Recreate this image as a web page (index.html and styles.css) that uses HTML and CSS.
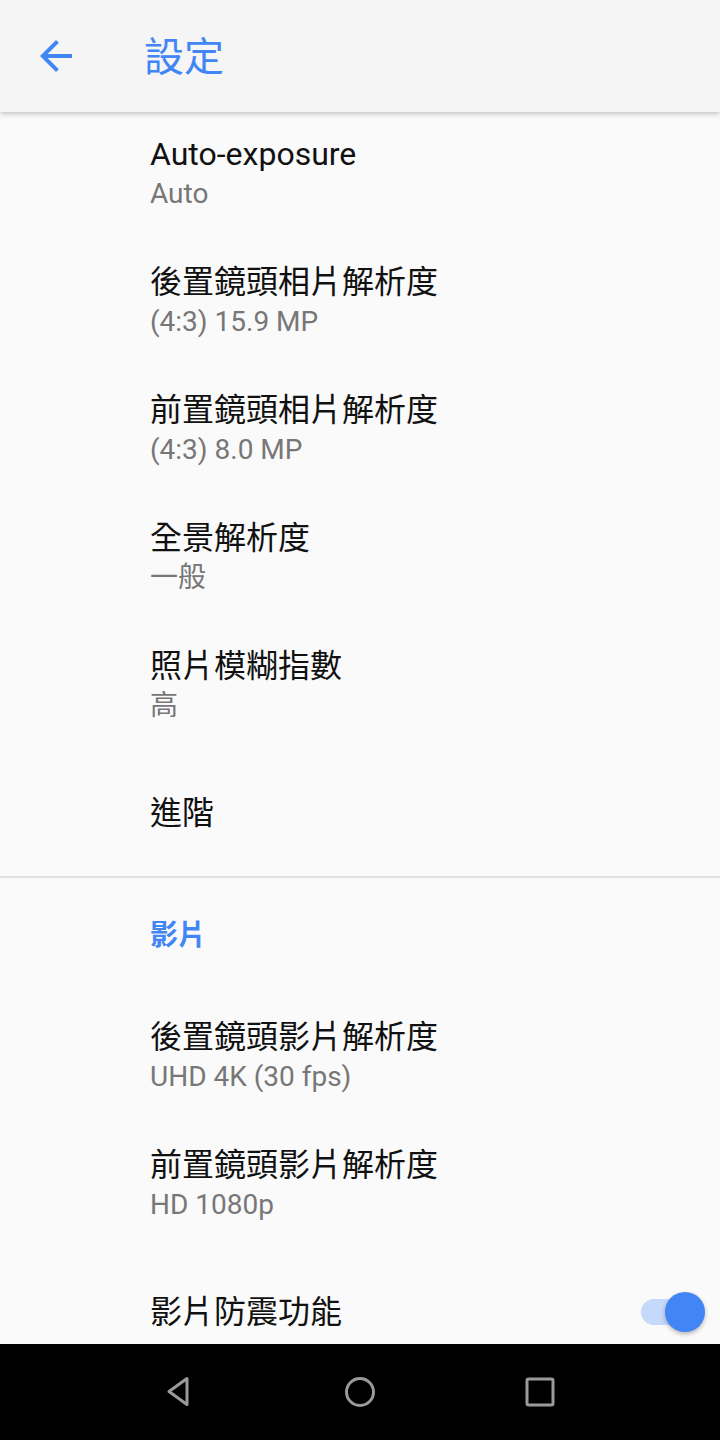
FILE: index.html
```html
<!DOCTYPE html>
<html lang="zh-Hant">
<head>
<meta charset="utf-8">
<title>設定</title>
<link rel="stylesheet" href="styles.css">
</head>
<body>
<div class="screen">
  <header class="appbar">
    <svg class="back" viewBox="0 0 24 24" width="48" height="48"><path d="M20 11H7.83l5.59-5.59L12 4l-8 8 8 8 1.41-1.41L7.83 13H20v-2z" fill="#4285f4"/></svg>
    <h1 class="title">設定</h1>
  </header>
  <main class="content">
    <ul class="list">
      <li class="item"><div class="item-title">Auto-exposure</div><div class="item-sub">Auto</div></li>
      <li class="item"><div class="item-title">後置鏡頭相片解析度</div><div class="item-sub">(4:3) 15.9 MP</div></li>
      <li class="item"><div class="item-title">前置鏡頭相片解析度</div><div class="item-sub">(4:3) 8.0 MP</div></li>
      <li class="item"><div class="item-title">全景解析度</div><div class="item-sub">一般</div></li>
      <li class="item"><div class="item-title">照片模糊指數</div><div class="item-sub">高</div></li>
      <li class="item item-single"><div class="item-title">進階</div></li>
    </ul>
    <div class="divider"></div>
    <div class="section">影片</div>
    <ul class="list">
      <li class="item"><div class="item-title">後置鏡頭影片解析度</div><div class="item-sub">UHD 4K (30 fps)</div></li>
      <li class="item"><div class="item-title">前置鏡頭影片解析度</div><div class="item-sub">HD 1080p</div></li>
      <li class="item item-row"><div class="item-title">影片防震功能</div><span class="switch"><span class="track"></span><span class="thumb"></span></span></li>
    </ul>
  </main>
  <nav class="navbar">
    <svg class="nav-icon" viewBox="0 0 40 40" width="40" height="40"><path d="M27 6.5 L9 19.5 L27 32.5 Z" fill="none" stroke="#9a9a9a" stroke-width="3" stroke-linejoin="round"/></svg>
    <svg class="nav-icon" viewBox="0 0 40 40" width="40" height="40"><circle cx="20" cy="20" r="13.5" fill="none" stroke="#9a9a9a" stroke-width="3"/></svg>
    <svg class="nav-icon" viewBox="0 0 40 40" width="40" height="40"><rect x="7" y="7" width="26" height="26" rx="1.5" fill="none" stroke="#9a9a9a" stroke-width="3"/></svg>
  </nav>
</div>
</body>
</html>
```
FILE: styles.css
```css
html, body {
  margin: 0;
  padding: 0;
}
body {
  width: 720px;
  height: 1440px;
  overflow: hidden;
  background: #fafafa;
  font-family: Roboto, "Noto Sans CJK TC", sans-serif;
}
.screen {
  display: flex;
  flex-direction: column;
  height: 1440px;
}
.appbar {
  position: relative;
  z-index: 2;
  flex: 0 0 112px;
  display: flex;
  align-items: center;
  background: #f5f5f5;
  box-shadow: 0 2px 5px rgba(0, 0, 0, 0.22);
}
.back {
  margin-left: 32px;
  margin-right: 64px;
}
.title {
  margin: 3px 0 0;
  font-size: 40px;
  font-weight: 400;
  color: #4285f4;
  line-height: 1;
}
.content {
  flex: 1;
  overflow: hidden;
  background: #fafafa;
}
.list {
  list-style: none;
  margin: 0;
  padding: 0;
}
.content > .list:first-child {
  margin-top: -3px;
}
.item {
  min-height: 128px;
  box-sizing: border-box;
  padding-left: 150px;
  display: flex;
  flex-direction: column;
  justify-content: center;
}
.item-single {
  min-height: 127px;
}
.item-title {
  font-size: 32px;
  line-height: 42px;
  color: #111;
}
.item-sub {
  font-size: 28px;
  line-height: 38px;
  color: #777;
}
.item-row {
  flex-direction: row;
  align-items: center;
  justify-content: space-between;
  padding-right: 15px;
}
.divider {
  height: 2px;
  background: #e2e2e2;
}
.section {
  height: 114px;
  box-sizing: border-box;
  padding-left: 150px;
  padding-bottom: 4px;
  display: flex;
  align-items: center;
  font-size: 28px;
  font-weight: 700;
  color: #4285f4;
}
.switch {
  position: relative;
  width: 64px;
  height: 40px;
}
.track {
  position: absolute;
  left: 0;
  top: 7px;
  width: 58px;
  height: 26px;
  border-radius: 13px;
  background: #c5d9fb;
}
.thumb {
  position: absolute;
  right: 0;
  top: 0;
  width: 40px;
  height: 40px;
  border-radius: 50%;
  background: #4285f4;
  box-shadow: 0 2px 4px rgba(0, 0, 0, 0.28);
}
.navbar {
  flex: 0 0 96px;
  background: #000;
  display: flex;
  align-items: center;
  justify-content: center;
  gap: 140px;
}
```
